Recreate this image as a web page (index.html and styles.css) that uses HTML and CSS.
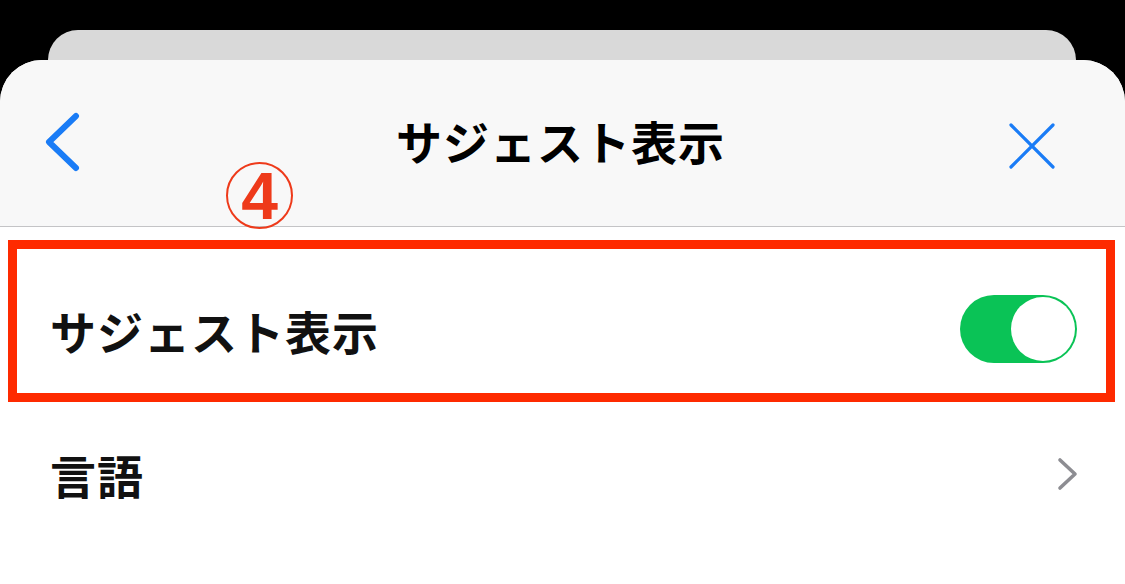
FILE: index.html
```html
<!DOCTYPE html>
<html lang="ja">
<head>
<meta charset="utf-8">
<title>サジェスト表示</title>
<link rel="stylesheet" href="styles.css">
</head>
<body>
<div class="screen">
  <div class="back-card"></div>
  <div class="sheet">
    <header class="header">
      <div class="nav-left">
        <svg class="back-icon" width="36" height="60" viewBox="0 0 36 60">
          <path d="M32 4 L5 30 L32 56" fill="none" stroke="#1a7cf6" stroke-width="6" stroke-linecap="round" stroke-linejoin="round"/>
        </svg>
      </div>
      <h1 class="title">サジェスト表示</h1>
      <div class="nav-right">
        <svg class="close-icon" width="46" height="46" viewBox="0 0 46 46">
          <path d="M2 2 L44 44 M44 2 L2 44" fill="none" stroke="#1a7cf6" stroke-width="3.2" stroke-linecap="round"/>
        </svg>
      </div>
    </header>
    <main class="content">
      <div class="row">
        <span class="row-label">サジェスト表示</span>
        <div class="toggle"><div class="knob"></div></div>
      </div>
      <div class="row">
        <span class="row-label">言語</span>
        <svg class="chevron" width="22" height="34" viewBox="0 0 22 34">
          <path d="M3 3 L18 17 L3 31" fill="none" stroke="#8d8d92" stroke-width="3.6" stroke-linecap="round" stroke-linejoin="round"/>
        </svg>
      </div>
    </main>
  </div>
  <div class="annot-circle">4</div>
  <div class="annot-box"></div>
</div>
</body>
</html>
```
FILE: styles.css
```css
* { box-sizing: border-box; }
html, body {
  margin: 0;
  padding: 0;
  background: #000;
}
body {
  width: 1125px;
  height: 584px;
  overflow: hidden;
  font-family: "Noto Sans CJK JP", "Noto Sans", sans-serif;
}
.screen {
  position: relative;
  width: 1125px;
  height: 584px;
  padding-top: 30px;
  display: flex;
  flex-direction: column;
}
.back-card {
  height: 30px;
  margin: 0 49px 0 48px;
  background: #d9d9d9;
  border-radius: 30px 30px 0 0;
}
.sheet {
  flex: 1;
  background: #fff;
  border-radius: 42px 42px 0 0;
  overflow: hidden;
  display: flex;
  flex-direction: column;
}
.header {
  height: 167px;
  background: #f8f8f8;
  border-bottom: 1px solid #c4c4c6;
  display: grid;
  grid-template-columns: 1fr auto 1fr;
  align-items: center;
  padding: 0 44px;
}
.nav-left {
  display: flex;
  align-items: center;
  padding-bottom: 2px;
}
.nav-right {
  display: flex;
  justify-content: flex-end;
  padding-top: 6px;
  padding-right: 26px;
}
.back-icon, .close-icon, .chevron { display: block; }
.title {
  margin: 0 0 0 -4px;
  font-size: 46px;
  font-weight: 700;
  line-height: 1;
  color: #000;
  letter-spacing: 1px;
  padding-bottom: 6px;
}
.content {
  padding-top: 31px;
  background: #fff;
}
.row {
  height: 144px;
  display: flex;
  align-items: center;
  justify-content: space-between;
  padding: 0 48px 0 50px;
}
.row-label {
  font-size: 46px;
  font-weight: 700;
  line-height: 1;
  color: #111;
  letter-spacing: 1px;
}
.toggle {
  width: 117px;
  height: 68px;
  border-radius: 34px;
  background: #0ac356;
  padding: 2px;
  display: flex;
  justify-content: flex-end;
  margin-bottom: 2px;
}
.knob {
  width: 64px;
  height: 64px;
  border-radius: 50%;
  background: #fff;
}
.chevron { margin-right: -2px; }
.annot-circle {
  position: absolute;
  left: 226px;
  top: 162px;
  width: 67px;
  height: 67px;
  border: 2px solid #ee3a1a;
  border-radius: 50%;
  color: #ee3a1a;
  font-family: "Liberation Sans", Arial, sans-serif;
  font-weight: 700;
  font-size: 66px;
  line-height: 64px;
  text-align: center;
}
.annot-box {
  position: absolute;
  left: 8px;
  top: 240px;
  width: 1107px;
  height: 162px;
  border: 9.5px solid #fe2a00;
}
```
